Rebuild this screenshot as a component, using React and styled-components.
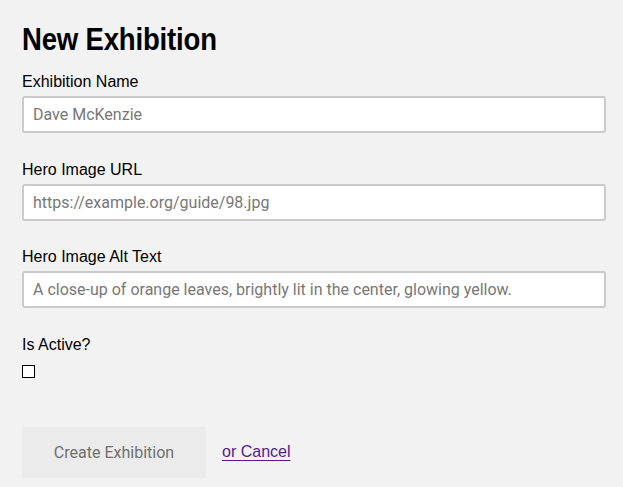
import React from "react";
import styled, { createGlobalStyle } from "styled-components";

const GlobalStyle = createGlobalStyle`
  html, body {
    margin: 0;
    padding: 0;
    background: #f2f2f2;
  }
`;

const Page = styled("form")`
  font-family: "Liberation Sans", Arial, sans-serif;
  background: #f2f2f2;
  min-height: 100vh;
  box-sizing: border-box;
  padding: 19px 17px 0 22px;
  color: #000;
`;

const Title = styled("h1")`
  font-family: "Liberation Sans", Arial, sans-serif;
  font-weight: 700;
  font-size: 32px;
  line-height: 40px;
  margin: 0 0 14px;
  transform: scaleX(0.86);
  transform-origin: left center;
  letter-spacing: -0.2px;
`;

const Field = styled("div")`
  display: flex;
  flex-direction: column;
  margin-bottom: ${(p) => p.$gap ?? 27.5}px;
`;

const Label = styled("label")`
  font-size: 16px;
  line-height: 18px;
  margin-bottom: 5px;
`;

const Input = styled("input")`
  box-sizing: border-box;
  width: 100%;
  height: 37px;
  border: 2px solid #cacaca;
  border-radius: 3px;
  background: #fff;
  padding: 0 9px;
  font-family: Roboto, "Liberation Sans", sans-serif;
  font-size: 16px;
  color: #222;
  outline: none;
  &::placeholder {
    color: #777;
  }
`;

const Checkbox = styled("input")`
  appearance: none;
  width: 13px;
  height: 13px;
  margin: 6px 0 0;
  border: 1px solid #000;
  background: #fff;
  box-sizing: border-box;
`;

const Actions = styled("div")`
  display: flex;
  align-items: center;
  gap: 16px;
  margin-top: 49px;
`;

const Button = styled("button")`
  height: 51px;
  width: 184px;
  border: none;
  background: #ebebeb;
  color: #6f6f6f;
  font-family: Roboto, "Liberation Sans", sans-serif;
  font-size: 16px;
`;

const CancelLink = styled("a")`
  color: #551a8b;
  font-size: 16px;
  text-decoration: underline;
  text-underline-offset: 3px;
`;

export default function App() {
  return (
    <>
      <GlobalStyle />
      <Page onSubmit={(e) => e.preventDefault()}>
        <Title>New Exhibition</Title>
        <Field>
          <Label>Exhibition Name</Label>
          <Input placeholder="Dave McKenzie" />
        </Field>
        <Field>
          <Label>Hero Image URL</Label>
          <Input placeholder="https://example.org/guide/98.jpg" />
        </Field>
        <Field>
          <Label>Hero Image Alt Text</Label>
          <Input placeholder="A close-up of orange leaves, brightly lit in the center, glowing yellow." />
        </Field>
        <Field $gap={0}>
          <Label>Is Active?</Label>
          <Checkbox type="checkbox" />
        </Field>
        <Actions>
          <Button type="submit" disabled>Create Exhibition</Button>
          <CancelLink href="#">or Cancel</CancelLink>
        </Actions>
      </Page>
    </>
  );
}
